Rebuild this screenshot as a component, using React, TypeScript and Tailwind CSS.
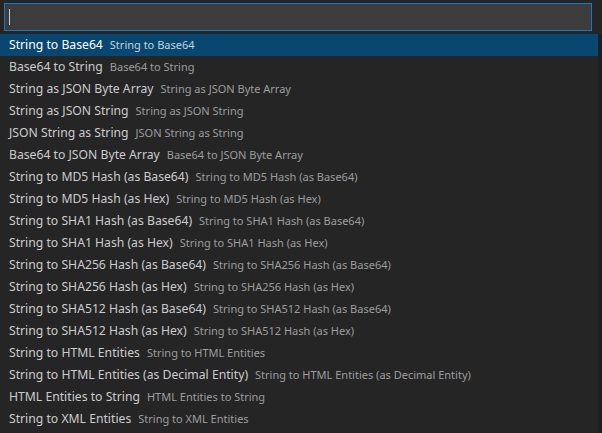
import React from 'react';

type Item = {
  label: string;
  description: string;
};

const items: Item[] = [
  { label: 'String to Base64', description: 'String to Base64' },
  { label: 'Base64 to String', description: 'Base64 to String' },
  { label: 'String as JSON Byte Array', description: 'String as JSON Byte Array' },
  { label: 'String as JSON String', description: 'String as JSON String' },
  { label: 'JSON String as String', description: 'JSON String as String' },
  { label: 'Base64 to JSON Byte Array', description: 'Base64 to JSON Byte Array' },
  { label: 'String to MD5 Hash (as Base64)', description: 'String to MD5 Hash (as Base64)' },
  { label: 'String to MD5 Hash (as Hex)', description: 'String to MD5 Hash (as Hex)' },
  { label: 'String to SHA1 Hash (as Base64)', description: 'String to SHA1 Hash (as Base64)' },
  { label: 'String to SHA1 Hash (as Hex)', description: 'String to SHA1 Hash (as Hex)' },
  { label: 'String to SHA256 Hash (as Base64)', description: 'String to SHA256 Hash (as Base64)' },
  { label: 'String to SHA256 Hash (as Hex)', description: 'String to SHA256 Hash (as Hex)' },
  { label: 'String to SHA512 Hash (as Base64)', description: 'String to SHA512 Hash (as Base64)' },
  { label: 'String to SHA512 Hash (as Hex)', description: 'String to SHA512 Hash (as Hex)' },
  { label: 'String to HTML Entities', description: 'String to HTML Entities' },
  { label: 'String to HTML Entities (as Decimal Entity)', description: 'String to HTML Entities (as Decimal Entity)' },
  { label: 'HTML Entities to String', description: 'HTML Entities to String' },
  { label: 'String to XML Entities', description: 'String to XML Entities' },
];

const App: React.FC = () => {
  return (
    <div
      className="w-[602px] h-[433px] overflow-hidden bg-[#252526] flex flex-col"
      style={{ fontFamily: '"Noto Sans", "Open Sans", sans-serif' }}
    >
      {/* Input */}
      <div className="pt-[3px] pl-[4px] pr-[10px] pb-[3px]">
        <div className="h-[28px] border border-[#0e7ad1] bg-[#3c3c3c] flex items-center pl-[4px]">
          <div className="w-px h-[16px] bg-[#cccccc]" />
        </div>
      </div>

      {/* List */}
      <div className="flex flex-row flex-1">
        <div className="w-[598px] flex flex-col">
          {items.map((item, i) => (
            <div
              key={item.label}
              className={
                'h-[22px] shrink-0 flex items-center pl-[9px] whitespace-nowrap ' +
                (i === 0 ? 'bg-[#094771]' : '')
              }
            >
              <span className={'text-[12.2px] ' + (i === 0 ? 'text-white' : 'text-[#cccccc]')}>
                {item.label}
              </span>
              <span className={'ml-[7px] text-[11px] ' + (i === 0 ? 'text-[#c2d2de]' : 'text-[#9d9d9d]')}>
                {item.description}
              </span>
            </div>
          ))}
        </div>
        <div className="w-[4px] bg-[#1e1e1e]" />
      </div>
    </div>
  );
};

export default App;
